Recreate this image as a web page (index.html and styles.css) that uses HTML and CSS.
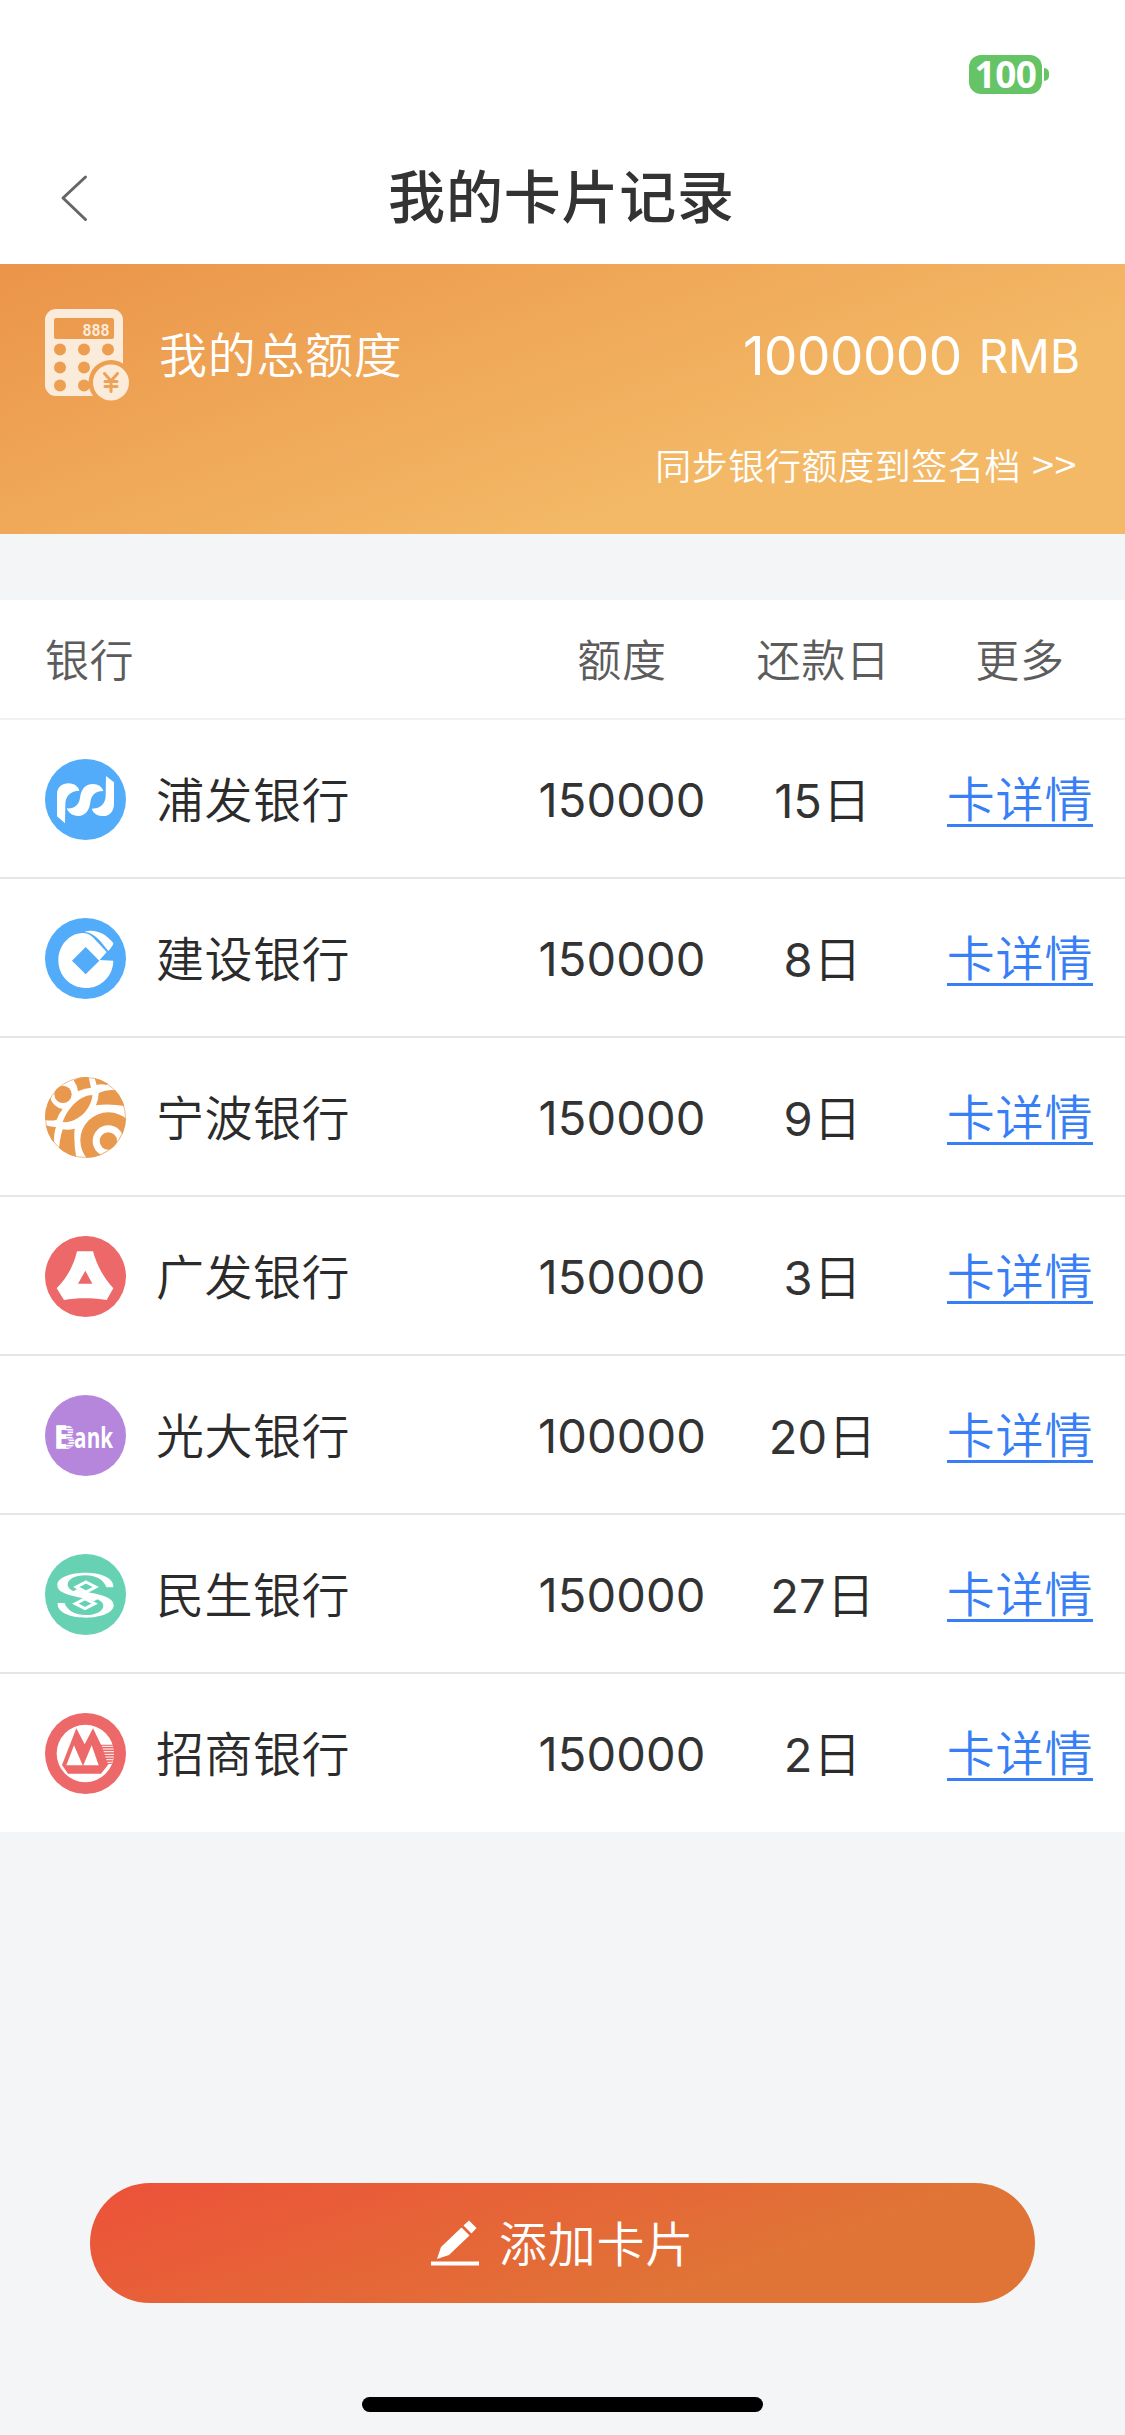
FILE: index.html
```html
<!DOCTYPE html>
<html lang="zh-CN">
<head>
<meta charset="utf-8">
<title>我的卡片记录</title>
<link rel="stylesheet" href="styles.css">
</head>
<body>
<div class="screen">
  <div class="status">
    <div class="battery">100</div>
    <div class="nub"></div>
  </div>
  <header class="nav">
    <svg class="back" viewBox="0 0 28 48"><path d="M25.5 3 L3 24 L25.5 45.500" fill="none" stroke="#666" stroke-width="3" stroke-linecap="round" stroke-linejoin="round"/></svg>
    <h1 class="title">我的卡片记录</h1>
    <div class="nav-side"></div>
  </header>
  <section class="summary">
    <div class="total">
      <svg class="calc" viewBox="0 0 84 92">
        <defs><mask id="calc-cut">
          <rect width="84" height="92" fill="#fff"/>
          <rect x="9" y="9" width="60" height="21" rx="2" fill="#000"/>
          <g fill="#000"><circle cx="15" cy="40.500" r="6"/><circle cx="39" cy="40.500" r="6"/><circle cx="63" cy="40.500" r="6"/><circle cx="15" cy="58.500" r="6"/><circle cx="39" cy="58.500" r="6"/><circle cx="15" cy="76.500" r="6"/><circle cx="39" cy="76.500" r="6"/><circle cx="66" cy="73.500" r="22.500"/></g>
        </mask></defs>
        <rect width="78" height="87" rx="11" fill="#fbebdb" mask="url(#calc-cut)"/>
        <text class="calc-digits" x="37.500" y="27" textLength="27" lengthAdjust="spacingAndGlyphs">888</text>
        <circle cx="66" cy="73.500" r="18" fill="#fbebdb"/>
        <path d="M59.500 64.500 L66 72 L72.500 64.500 M66 72 V82.500 M60 72.500 H72 M60 77.500 H72" fill="none" stroke="#eda257" stroke-width="3" stroke-linecap="round"/>
      </svg>
      <span class="total-label">我的总额度</span>
      <span class="total-value">1000000</span>
      <span class="total-unit">RMB</span>
    </div>
    <a class="sync">同步银行额度到签名档 <span class="sync-arrow">&gt;&gt;</span></a>
  </section>
  <section class="list">
    <div class="row head">
      <span class="bank">银行</span><span class="cell">额度</span><span class="cell">还款日</span><span class="cell">更多</span>
    </div>
    <div class="row">
      <div class="bank">
        <svg class="logo" viewBox="45 56 243 243"><circle cx="166.500" cy="177.500" r="121.500" fill="#52acf9"/>
        <g fill="#fff"><path d="M81 162 C81 140 97 129 116 129 C133 129 146 140 148 151 C122 152 106 167 106 192 L105 249 L81 228Z"/><path d="M110 204 C134 206 147 193 150 173 C153 148 165 131 189 131 C205 131 217 141 220 152 C195 152 184 165 181 186 C178 211 166 227 144 227 C128 227 115 217 110 204Z"/><path d="M185 205 C211 206 227 190 227 165 L228 107 L252 126 V190 C252 213 238 228 218 227 C202 227 189 218 185 205Z"/></g></svg>
        <span class="name">浦发银行</span>
      </div>
      <span class="cell num">150000</span><span class="cell day">15<b>日</b></span><a class="cell link"><span>卡详情</span></a>
    </div>
    <div class="row">
      <div class="bank">
        <svg class="logo" viewBox="45 531 243 243"><circle cx="166.500" cy="652.500" r="121.500" fill="#52acf9"/>
        <path fill="#fff" fill-rule="evenodd" d="M158 576 C172 576 181 581 190 590 L230 633 L209 657 L250 659 C249 706 213 741 167 741 C120 741 85 704 85 658 C85 613 118 577 158 576Z M167 618 L126 659 L167 700 L208 659Z"/>
        <path fill="#fff" d="M163 572 C200 563 226 579 250 606 Q252 611 235 630 C214 603 195 576 163 572Z"/></svg>
        <span class="name">建设银行</span>
      </div>
      <span class="cell num">150000</span><span class="cell day">8<b>日</b></span><a class="cell link"><span>卡详情</span></a>
    </div>
    <div class="row">
      <div class="bank">
        <svg class="logo" viewBox="15 18 243 243"><defs><clipPath id="disc"><circle cx="136.500" cy="139.500" r="121.500"/></clipPath></defs>
        <g clip-path="url(#disc)" fill="#e8994e">
          <circle cx="69" cy="70" r="26"/>
          <path d="M101 28 Q122 16 145 14 L153 50 Q130 52 114 61 Q112 44 101 28Z"/>
          <path d="M162 14 L210 30 L200 42 Q182 38 170 42Z"/>
          <path d="M176 66 Q200 54 228 58 L264 107 Q210 97 168 103 Q176 85 176 66Z"/>
          <path d="M157 72 C125 72 85 105 68 153 C110 158 155 115 157 72Z"/>
          <path d="M30 78 Q38 108 68 114 Q55 130 50 146 Q35 151 10 146 L10 90Z"/>
          <path d="M10 160 Q30 168 48 168 Q40 190 42 230 L10 210Z"/>
          <path d="M68 175 Q85 178 104 173 Q100 215 110 268 L56 250 Q58 205 68 175Z"/>
          <circle cx="205" cy="208" r="84"/>
          <circle cx="205" cy="210" r="47" fill="#fff"/>
          <circle cx="205" cy="210" r="26"/>
        </g>
        <circle cx="136.500" cy="139.500" r="120" fill="none" stroke="#e8994e" stroke-width="2"/></svg>
        <span class="name">宁波银行</span>
      </div>
      <span class="cell num">150000</span><span class="cell day">9<b>日</b></span><a class="cell link"><span>卡详情</span></a>
    </div>
    <div class="row">
      <div class="bank">
        <svg class="logo" viewBox="45 527 243 243"><circle cx="166.500" cy="648.500" r="121.500" fill="#ed6869"/>
        <path fill="#fff" fill-rule="evenodd" d="M141 573 H189 C201 617 221 652 250 684 L230 719 C190 712 140 712 102 719 L80 684 C111 652 131 617 141 573Z M166 631 L144 670 H187Z"/></svg>
        <span class="name">广发银行</span>
      </div>
      <span class="cell num">150000</span><span class="cell day">3<b>日</b></span><a class="cell link"><span>卡详情</span></a>
    </div>
    <div class="row">
      <div class="bank">
        <svg class="logo" viewBox="45 42 243 243"><circle cx="166.500" cy="163.500" r="121.500" fill="#b586dc"/>
        <text class="mark-b" x="75" y="200" textLength="60" lengthAdjust="spacingAndGlyphs">B</text>
        <path d="M108 134 H138 M108 142 H138 M108 150 H138 M108 158 H138 M108 166 H138 M108 174 H138 M108 182 H138 M108 190 H138 M108 198 H138" stroke="#b586dc" stroke-width="3"/>
        <text class="mark-ank" x="132" y="200" textLength="118" lengthAdjust="spacingAndGlyphs">ank</text></svg>
        <span class="name">光大银行</span>
      </div>
      <span class="cell num">100000</span><span class="cell day">20<b>日</b></span><a class="cell link"><span>卡详情</span></a>
    </div>
    <div class="row">
      <div class="bank">
        <svg class="logo" viewBox="45 519 243 243"><circle cx="166.500" cy="640.500" r="121.500" fill="#66d1b3"/>
        <defs><path id="hook" d="M250 619 H229 C222 596 196 583 165 583 C136 583 113 594 113 611 C114 628 140 635 170 642 L205 653 L192 661 C150 645 82 645 82 612 C82 588 125 575 165 575 C215 575 253 592 250 619Z"/></defs>
        <use href="#hook" fill="#fff"/><use href="#hook" fill="#fff" transform="rotate(180 166.500 642.500)"/>
        <g fill="#66d1b3" stroke="#fff" stroke-width="9"><path d="M168 603 L197 618 L168 633 L139 618Z"/><path d="M165 653 L194 668 L165 683 L136 668Z"/></g></svg>
        <span class="name">民生银行</span>
      </div>
      <span class="cell num">150000</span><span class="cell day">27<b>日</b></span><a class="cell link"><span>卡详情</span></a>
    </div>
    <div class="row">
      <div class="bank">
        <svg class="logo" viewBox="45 37 243 243"><circle cx="166.500" cy="158.500" r="121.500" fill="#ed6869"/><circle cx="166" cy="158.500" r="86" fill="#fff"/>
        <g fill="#ed6869"><path d="M96 193 L139 83 L164 131 L189 83 L213 132 L236 190 L213 219 H114Z"/><path d="M210 132 H254 V160 L245 190 H234Z"/></g>
        <path fill="#fff" d="M109 194 L132 134 L158 194Z M160 194 L185 134 L206 194Z"/>
        <path d="M216 137 H249 M218 145 H251 M221 153 H252 M224 161 H252 M226 169 H251 M229 177 H249 M232 185 H247" stroke="#fff" stroke-width="3"/></svg>
        <span class="name">招商银行</span>
      </div>
      <span class="cell num">150000</span><span class="cell day">2<b>日</b></span><a class="cell link"><span>卡详情</span></a>
    </div>
  </section>
  <footer class="footer">
    <button class="add">
      <svg class="pencil" viewBox="0 0 48 46"><g fill="#fff"><path d="M0 41.500 H48 V45.500 H0Z M6 39 L10 27 L30.500 7.500 L38.500 15.500 L18 35Z"/><path d="M32.500 5.500 L38 0.500 L45.500 8 L40.500 13.500Z"/></g></svg>
      <span>添加卡片</span>
    </button>
    <div class="home"></div>
  </footer>
</div>
</body>
</html>
```
FILE: styles.css
```css
* { box-sizing: border-box; }
body {
  margin: 0;
  background: #f3f5f7;
  color: #333;
  font-family: Inter, "Noto Sans CJK SC", sans-serif;
}
.screen { width: 1125px; height: 2435px; display: flex; flex-direction: column; }

.status {
  height: 134px;
  padding: 55px 76px 0 0;
  background: #fff;
  display: flex;
  justify-content: flex-end;
  gap: 2px;
}
.battery {
  width: 73px;
  height: 39px;
  border-radius: 12px;
  background: #65c466;
  color: #fff;
  font: 700 37px/37px "Noto Sans", sans-serif;
  letter-spacing: -.5px;
  text-align: center;
}
.nub { width: 5px; height: 13px; margin-top: 13px; border-radius: 0 5px 5px 0; background: #65c466; }

.nav {
  height: 130px;
  padding: 0 60px 3px;
  background: #fff;
  display: flex;
  align-items: center;
  justify-content: space-between;
}
.back { width: 28px; height: 48px; }
.nav-side { width: 30px; }
.title { margin: 0; font-size: 57px; font-weight: 500; letter-spacing: .8px; line-height: 80px; }

.summary {
  height: 270px;
  padding: 45px 45px 0;
  background: linear-gradient(160deg, #eb9449 0%, #f3b966 70%);
  color: #fff;
}
.total { height: 92px; display: flex; align-items: center; }
.calc { width: 84px; height: 92px; }
.calc-digits { fill: #fbebdb; font: 700 19px "Liberation Mono", monospace; }
.total-label { margin-left: 30px; padding-bottom: 6px; font-size: 48px; letter-spacing: .7px; font-weight: 350; }
.total-value { margin-left: auto; padding-top: 1px; font-size: 53px; letter-spacing: -.5px; }
.total-unit { margin-left: 17px; padding-top: 1px; font-size: 46px; }
.sync {
  display: block;
  margin-top: 39px;
  padding-right: 3px;
  font-size: 36px;
  line-height: 54px;
  letter-spacing: .6px;
  text-align: right;
  font-weight: 350;
}
.sync-arrow { display: inline-block; font: 350 40px/40px "Noto Sans CJK SC", sans-serif; }

.list { margin-top: 66px; background: #fff; }
.row {
  height: 159px;
  padding: 1px 0 0 45px;
  display: grid;
  grid-template-columns: 477px 200px 201px 194px;
  align-items: center;
  border-bottom: 2px solid #e6e6e6;
  font-size: 48px;
}
.row:last-child { height: 158px; border-bottom: 0; padding-top: 0; }
.head {
  height: 120px;
  padding-top: 0;
  padding-bottom: 2px;
  grid-template-columns: 477px 200px 203px 190px;
  border-bottom: 2px solid #f1f1f1;
  font-size: 44px;
  font-weight: 350;
  letter-spacing: .7px;
  color: #5c5c5c;
}
.bank { display: flex; align-items: center; gap: 30px; letter-spacing: .5px; }
.name { padding-bottom: 5px; }
.logo { width: 81px; height: 81px; }
.cell { text-align: center; white-space: nowrap; }
.num { font-size: 47px; letter-spacing: .1px; }
.day { font-size: 47px; padding: 0 0 5px; }
.day b { margin-left: 1px; font-size: 48px; font-weight: 350; }
.name, .link { font-weight: 350; }
.name, .day b { color: #2b2b2b; }
.link { color: #387ff7; }
.link span { border-bottom: 3px solid; letter-spacing: .9px; display: inline-block; height: 53px; line-height: 52px; }
.mark-b { fill: #fff; stroke: #fff; stroke-width: 4px; font: 700 96px "Liberation Sans", sans-serif; }
.mark-ank { fill: #fff; font: 700 84px "Open Sans", sans-serif; }

.footer { margin-top: auto; display: flex; flex-direction: column; align-items: center; }
.add {
  width: 945px;
  height: 120px;
  padding: 0;
  border: 0;
  border-radius: 60px;
  background: linear-gradient(160deg, #ed5139 0%, #e07436 70%);
  color: #fff;
  font: 350 48px Inter, "Noto Sans CJK SC", sans-serif;
  letter-spacing: .8px;
  display: flex;
  align-items: center;
  justify-content: center;
  gap: 20px;
}
.add span { padding-bottom: 5px; }
.pencil { width: 48px; height: 46px; }
.home { width: 401px; height: 15px; margin: 94px 0 23px; border-radius: 8px; background: #000; }
```
